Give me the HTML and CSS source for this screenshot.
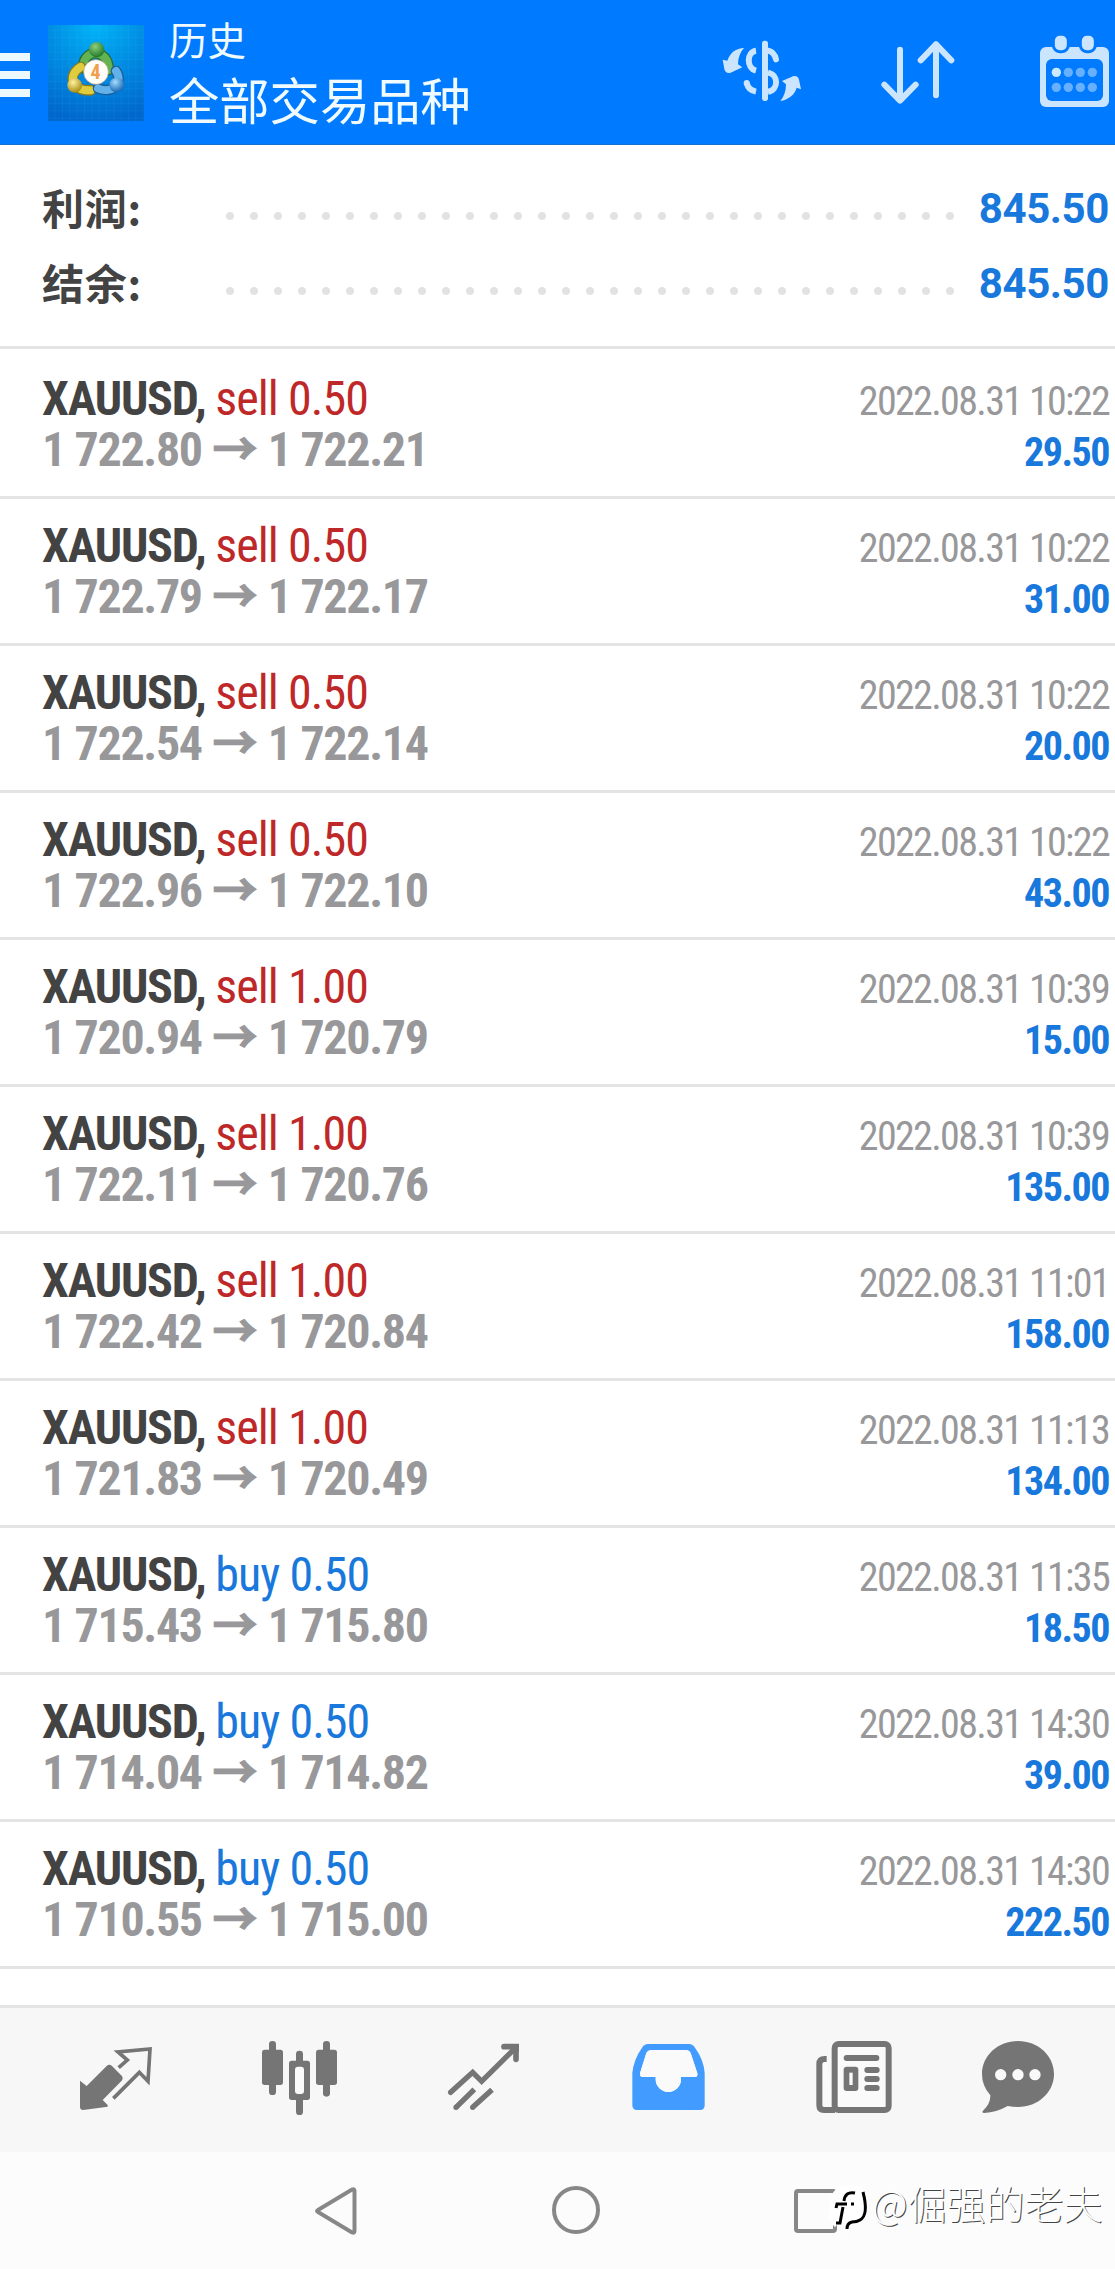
FILE: index.html
```
<!DOCTYPE html>
<html lang="zh-CN">
<head>
<meta charset="utf-8">
<title>历史</title>
<link rel="stylesheet" href="styles.css">
</head>
<body>
<header class="topbar">
  <div class="menu"><i></i><i></i><i></i></div>
  <svg class="logo" viewBox="24 30 288 288">
    <defs>
      <radialGradient id="sky" cx=".5" cy="0" r="1"><stop offset="0" stop-color="#00b4f8"/><stop offset=".5" stop-color="#008ce2"/><stop offset="1" stop-color="#0068cc"/></radialGradient>
      <radialGradient id="green" cx=".4" cy=".3" r=".7"><stop offset="0" stop-color="#8fce7a"/><stop offset="1" stop-color="#1f7a2b"/></radialGradient>
      <radialGradient id="gold" cx=".4" cy=".3" r=".7"><stop offset="0" stop-color="#fff3a0"/><stop offset="1" stop-color="#a98c12"/></radialGradient>
      <radialGradient id="blue" cx=".4" cy=".3" r=".7"><stop offset="0" stop-color="#a5dbff"/><stop offset="1" stop-color="#1668b4"/></radialGradient>
      <pattern id="grid" width="22" height="22" patternUnits="userSpaceOnUse"><path d="M0 0H22M0 0V22" stroke="#7fd4ff" stroke-opacity=".18" stroke-width="2"/></pattern>
    </defs>
    <rect x="24" y="30" width="288" height="288" fill="url(#sky)"/>
    <rect x="24" y="30" width="288" height="288" fill="url(#grid)"/>
    <g fill="none" stroke-linecap="round">
      <path d="M130 160C125 100 208 98 206 165" stroke="#2c6a35" stroke-width="32"/>
      <path d="M130 160C125 100 208 98 206 165" stroke="#62b352" stroke-width="24"/>
      <path d="M122 156C84 178 90 228 152 226" stroke="#8a7a1c" stroke-width="32"/>
      <path d="M122 156C84 178 90 228 152 226" stroke="#e0cd3e" stroke-width="24"/>
      <path d="M228 168C252 205 216 238 174 220" stroke="#1b5f9a" stroke-width="32"/>
      <path d="M228 168C252 205 216 238 174 220" stroke="#62b1ea" stroke-width="24"/>
    </g>
    <circle cx="170" cy="104" r="23" fill="url(#green)"/>
    <circle cx="104" cy="211" r="22" fill="url(#gold)"/>
    <circle cx="230" cy="210" r="22" fill="url(#blue)"/>
    <circle cx="168" cy="171" r="37" fill="#fffdf8" stroke="#b9a27c" stroke-width="2"/>
    <text class="logo-digit" x="167" y="193" text-anchor="middle">4</text>
  </svg>
  <div class="titles"><div class="screen">历史</div><h1>全部交易品种</h1></div>
  <div class="actions">
    <svg width="83" height="67" viewBox="120 111 249 201" fill="#cce5ff">
      <path d="M192 144C168 145 151 157 142 182L128 179L133 207Q137 222 152 218L187 202L174 193C174 173 180 158 192 144Z"/>
      <path d="M301 303C325 299 345 284 350 263L363 268L357 239Q354 226 341 228L306 243L318 253C318 274 312 290 301 303Z"/>
      <rect x="246" y="122" width="18" height="181" rx="8"/>
      <g fill="none" stroke="#cce5ff" stroke-width="18"><path d="M228 152C200 156 198 204 228 212"/><path d="M264 152Q283 156 288 178" stroke-linecap="round"/><path d="M264 218C297 224 296 270 264 275"/><path d="M200 249Q205 270 228 275"/></g>
      <circle cx="200" cy="249" r="9"/>
    </svg>
    <svg width="75" height="67" viewBox="603 111 225 201" fill="none" stroke="#cce5ff" stroke-width="18" stroke-linecap="round" stroke-linejoin="round">
      <path d="M660 149V300M613 254L660 302L707 254M768 286V133M722 181L768 133L814 181"/>
    </svg>
    <svg width="70" height="73" viewBox="1080 105 210 219">
      <rect x="1080" y="141" width="207" height="180" rx="18" fill="#cce5ff"/>
      <rect x="1098" y="177" width="171" height="126" rx="18" fill="#007aff"/>
      <g fill="#cce5ff" stroke="#007aff" stroke-width="9"><rect x="1120" y="103" width="45" height="52" rx="19"/><rect x="1201" y="103" width="45" height="52" rx="19"/></g>
      <g fill="#66b0ff"><circle cx="1129" cy="217" r="14" fill="#cce9ff"/><circle cx="1165" cy="217" r="14"/><circle cx="1201" cy="217" r="14"/><circle cx="1237" cy="217" r="14"/><circle cx="1129" cy="262" r="14"/><circle cx="1165" cy="262" r="14"/><circle cx="1201" cy="262" r="14"/><circle cx="1237" cy="262" r="14"/></g>
    </svg>
  </div>
</header>

<section class="summary">
  <div class="sum"><span class="label">利润:</span><span class="leader"></span><b>845.50</b></div>
  <div class="sum"><span class="label">结余:</span><span class="leader"></span><b>845.50</b></div>
</section>

<main class="deals">
  <article class="deal"><div class="line"><span class="symbol">XAUUSD, <em class="sell">sell 0.50</em></span><time>2022.08.31 10:22</time></div><div class="line"><span class="price">1 722.80 <i>→</i> 1 722.21</span><b>29.50</b></div></article>
  <article class="deal"><div class="line"><span class="symbol">XAUUSD, <em class="sell">sell 0.50</em></span><time>2022.08.31 10:22</time></div><div class="line"><span class="price">1 722.79 <i>→</i> 1 722.17</span><b>31.00</b></div></article>
  <article class="deal"><div class="line"><span class="symbol">XAUUSD, <em class="sell">sell 0.50</em></span><time>2022.08.31 10:22</time></div><div class="line"><span class="price">1 722.54 <i>→</i> 1 722.14</span><b>20.00</b></div></article>
  <article class="deal"><div class="line"><span class="symbol">XAUUSD, <em class="sell">sell 0.50</em></span><time>2022.08.31 10:22</time></div><div class="line"><span class="price">1 722.96 <i>→</i> 1 722.10</span><b>43.00</b></div></article>
  <article class="deal"><div class="line"><span class="symbol">XAUUSD, <em class="sell">sell 1.00</em></span><time>2022.08.31 10:39</time></div><div class="line"><span class="price">1 720.94 <i>→</i> 1 720.79</span><b>15.00</b></div></article>
  <article class="deal"><div class="line"><span class="symbol">XAUUSD, <em class="sell">sell 1.00</em></span><time>2022.08.31 10:39</time></div><div class="line"><span class="price">1 722.11 <i>→</i> 1 720.76</span><b>135.00</b></div></article>
  <article class="deal"><div class="line"><span class="symbol">XAUUSD, <em class="sell">sell 1.00</em></span><time>2022.08.31 11:01</time></div><div class="line"><span class="price">1 722.42 <i>→</i> 1 720.84</span><b>158.00</b></div></article>
  <article class="deal"><div class="line"><span class="symbol">XAUUSD, <em class="sell">sell 1.00</em></span><time>2022.08.31 11:13</time></div><div class="line"><span class="price">1 721.83 <i>→</i> 1 720.49</span><b>134.00</b></div></article>
  <article class="deal"><div class="line"><span class="symbol">XAUUSD, <em class="buy">buy 0.50</em></span><time>2022.08.31 11:35</time></div><div class="line"><span class="price">1 715.43 <i>→</i> 1 715.80</span><b>18.50</b></div></article>
  <article class="deal"><div class="line"><span class="symbol">XAUUSD, <em class="buy">buy 0.50</em></span><time>2022.08.31 14:30</time></div><div class="line"><span class="price">1 714.04 <i>→</i> 1 714.82</span><b>39.00</b></div></article>
  <article class="deal"><div class="line"><span class="symbol">XAUUSD, <em class="buy">buy 0.50</em></span><time>2022.08.31 14:30</time></div><div class="line"><span class="price">1 710.55 <i>→</i> 1 715.00</span><b>222.50</b></div></article>
</main>

<nav class="tabs">
  <svg viewBox="42 24 252 252" fill="#757575">
    <path d="M60 152L80 168L140 108Q148 101 156 108L185 137Q191 145 185 152L128 210L143 225V230L70 240Q60 240 60 231Z"/>
    <path d="M176 113L202 90L174 66L270 57L264 154L238 127L160 205" fill="none" stroke="#757575" stroke-width="11"/>
  </svg>
  <svg viewBox="594 24 252 252" fill="#757575">
    <rect x="627" y="33" width="21" height="162" rx="10"/><rect x="606" y="59" width="63" height="106" rx="8"/>
    <rect x="789" y="33" width="21" height="167" rx="10"/><rect x="768" y="59" width="63" height="106" rx="8"/>
    <rect x="708" y="62" width="21" height="193" rx="10"/><rect x="687" y="92" width="63" height="118" rx="8"/><rect x="705" y="110" width="27" height="82" rx="9" fill="#fafafa"/>
  </svg>
  <svg viewBox="1143 24 252 252" fill="none" stroke="#757575" stroke-width="16">
    <path d="M1172 187L1238 127L1265 154L1364 56" stroke-linecap="round"/>
    <path d="M1332 50H1368V88" stroke-width="17" stroke-linecap="round"/><path d="M1350 42H1377V66Z" fill="#757575" stroke="none"/>
    <path d="M1188 232L1243 178M1238 232L1296 179"/><path d="M1188 232h.1M1238 232h.1" stroke-linecap="round"/>
  </svg>
  <svg viewBox="21 24 252 252">
    <path fill="#429bff" fill-rule="evenodd" d="M84 42H207Q218 42 225 53Q252 90 254 130V226Q254 240 240 240H51Q37 240 37 226V130Q40 90 66 53Q73 42 84 42ZM96 60Q84 60 79 69L60 130Q59 141 68 141H107V148A38 38 0 0 0 183 148V141H225Q234 141 232 130L212 69Q208 60 196 60Z"/>
    <path fill="#fafafa" d="M96 60Q84 60 79 69L60 130Q59 141 68 141H107V148A38 38 0 0 0 183 148V141H225Q234 141 232 130L212 69Q208 60 196 60Z"/>
  </svg>
  <svg viewBox="576 24 252 252">
    <path d="M620 87H614Q598 87 598 102V226Q598 240 612 240H645" fill="#fafafa" stroke="#757575" stroke-width="18"/>
    <rect x="644" y="42" width="162" height="198" rx="12" fill="#fafafa" stroke="#757575" stroke-width="18"/>
    <g fill="#757575"><rect x="671" y="75" width="107" height="18" rx="9"/><rect x="671" y="110" width="44" height="73" rx="9"/><rect x="733" y="111" width="46" height="18" rx="9"/><rect x="733" y="138" width="46" height="18" rx="9"/><rect x="733" y="165" width="46" height="18" rx="9"/></g>
    <rect x="688" y="128" width="10" height="37" fill="#fafafa"/>
  </svg>
  <svg viewBox="1068 24 252 252">
    <path fill="#757575" d="M1194 33C1254 33 1302 77 1302 132S1254 231 1194 231Q1178 231 1163 228Q1130 247 1093 249Q1084 248 1089 242Q1112 221 1111 196Q1086 168 1086 132C1086 77 1134 33 1194 33Z"/>
    <g fill="#fafafa"><circle cx="1142" cy="134" r="17"/><circle cx="1194" cy="134" r="17"/><circle cx="1245" cy="134" r="17"/></g>
  </svg>
</nav>

<footer class="system">
  <svg viewBox="0 0 48 50"><path d="M6 24Q4 25 6 26L40 46.500Q42.500 47.500 42.500 45V5Q42.500 2.500 40 3.500Z"/></svg>
  <svg viewBox="0 0 48 50"><circle cx="24" cy="24" r="22"/></svg>
  <svg viewBox="0 0 48 50"><rect x="4" y="5" width="39" height="40" rx="2"/></svg>
  <div class="watermark">
    <svg viewBox="0 0 46 50"><path class="blob" d="M12 5Q26 -1 34 4Q41 10 40 20Q40 34 26 38L21 46L17 41Q13 34 9 39L4 33L6 20Q6 10 12 5Z"/><path class="ink" d="M29 8Q19 6 18 16M17 22L14 38H10M10 23L11 19H21M25 19H28M37 7Q43 30 34 35Q31 37 26 37Q21 38 21 44"/></svg><span>@倔强的老夫</span>
  </div>
</footer>
</body>
</html>
```
FILE: styles.css
```
* { box-sizing: border-box; }
body { margin: 0; width: 1115px; background: #fff; font-family: Roboto, "Noto Sans CJK SC", sans-serif; }
svg { display: block; flex: none; }

.topbar { display: flex; height: 145px; margin-bottom: -1px; background: #007aff; border-bottom: 1px solid #1471d4; color: #f0fbff; }
.menu { display: flex; flex-direction: column; gap: 10px; width: 30px; padding-top: 53px; }
.menu i { height: 8px; background: #ecf9ff; }
.logo { width: 96px; height: 96px; margin: 25px 0 0 18px; }
.logo-digit { font: bold 60px "Roboto Condensed", Roboto, sans-serif; fill: #f0a04c; }
.titles { margin-left: 25px; padding-top: 13px; font-family: "Noto Sans CJK SC", sans-serif; white-space: nowrap; }
.screen { font-size: 38.5px; line-height: 50px; }
.titles h1 { margin: 4px 0 0; font-size: 50.3px; font-weight: 400; line-height: 63px; }
.actions { display: flex; align-items: flex-start; gap: 78px; margin-left: auto; padding: 37px 5px 0 0; }
.actions svg:last-child { margin: -2px 0 0 6px; }

.summary { height: 205px; padding: 27px 6px 0 42px; border-bottom: 3px solid #e4e4e4; }
.sum { display: flex; height: 75px; line-height: 75px; font-size: 42px; justify-content: space-between; }
.label { width: 176px; line-height: 71px; letter-spacing: .8px; font-family: "Noto Sans CJK SC", sans-serif; font-weight: 700; color: #434343; }
.leader { width: 744px; height: 75px; background: radial-gradient(circle at 12px 45px, #e2e2e2 3.5px, transparent 4.5px) 0 0 / 24px 75px; }
.sum b { flex: 1; text-align: right; color: #1878dc; letter-spacing: -.4px; }

.deals { height: 1656px; padding-top: 3px; font-family: "Roboto Condensed", Roboto, sans-serif; }
.deal { height: 147px; padding: 21px 6px 0 42px; border-bottom: 3px solid #e4e4e4; }
.line { display: flex; justify-content: space-between; align-items: baseline; height: 51px; line-height: 51px; font-size: 48px; white-space: nowrap; }
.symbol { font-weight: 700; letter-spacing: -1.2px; color: #434343; }
.symbol em { font-style: normal; font-weight: 400; letter-spacing: -.95px; }
.symbol .sell { color: #bf2828; }
.symbol .buy { color: #1878dc; }
.line time { font-size: 40px; letter-spacing: -1.65px; color: #98989a; }
.price { font-weight: 700; letter-spacing: -1.35px; color: #98989b; }
.price i { margin: 0 2px 0 1px; font: 700 45px/0 "Noto Sans CJK SC", sans-serif; -webkit-text-stroke: 1.2px #98989b; }
.line b { font-size: 40px; letter-spacing: -1.5px; color: #1878dc; }

.tabs { display: grid; grid-template-columns: 184px 183px 184px 187px 184px 144px; place-items: center; height: 147px; padding-left: 24px; border-top: 3px solid #e4e4e4; background: #f7f7f7; }
.tabs svg { width: 84px; height: 84px; }

.system { position: relative; display: flex; gap: 192px; height: 117px; padding: 34px 0 0 312px; background: #fcfcfc; }
.system > svg { width: 48px; height: 50px; fill: none; stroke: #878787; stroke-width: 4; }
.watermark { position: absolute; left: 826px; top: 31px; display: flex; white-space: nowrap; }
.watermark svg { width: 46px; height: 50px; margin-top: 2px; }
.watermark span { margin-top: -2px; font: 300 39px/42px "Noto Sans CJK SC", sans-serif; color: #fff; text-shadow: 1px 1px 0 #444; }
.blob { fill: #fff; stroke: #fff; stroke-width: 4; }
.ink { fill: none; stroke: #000; stroke-width: 3; }
```
